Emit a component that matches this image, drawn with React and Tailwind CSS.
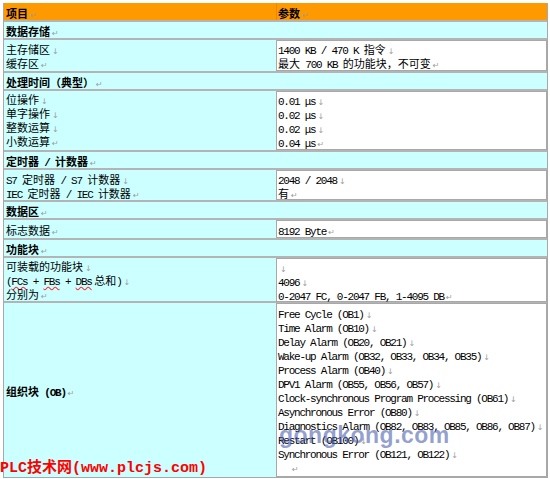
import React from "react";

const MONO = "font-['Liberation_Mono',monospace] text-[11px] tracking-[-1.25px]";
const CJK = "font-['Noto_Sans_CJK_SC',sans-serif] text-[11px]";

// split a string into ascii / cjk runs so each gets its own font
function Mixed({ text }) {
  const parts = text.match(/[\x00-\x7Fμ]+|[^\x00-\x7Fμ]+/g) || [];
  return parts.map((p, i) =>
    /[\x00-\x7Fμ]/.test(p[0]) ? (
      <span key={i} className={MONO}>{p}</span>
    ) : (
      <span key={i} className={CJK}>{p}</span>
    )
  );
}

function Mark({ m }) {
  if (!m) return null;
  return (
    <span className="ml-[2px] font-['DejaVu_Sans',sans-serif] text-[8px] font-normal text-[#9c9c9c]">
      {m === "p" ? "↵" : "↓"}
    </span>
  );
}

function Line({ t, m = "br", className = "" }) {
  return (
    <div className={`h-[14px] whitespace-nowrap leading-[14px] text-black ${className}`}>
      <Mixed text={t} />
      <Mark m={m} />
    </div>
  );
}

function Section({ title }) {
  return (
    <div className="flex h-[18px] items-center border-t-2 border-[#b4b4b4] bg-[#ccffff] px-[2px] font-bold">
      <Line t={title} m="p" />
    </div>
  );
}

function Row({ h, left, right, center = false }) {
  return (
    <div className={`grid grid-cols-[272px_1fr] border-t-2 border-[#b4b4b4] bg-[#ccffff] ${h}`}>
      <div className={`flex flex-col px-[2px] ${center ? "justify-center" : "justify-start"}`}>
        {left}
      </div>
      <div className="flex flex-col border border-[#a8a8a8] bg-white px-px">{right}</div>
    </div>
  );
}

export default function App() {
  return (
    <div className="relative h-[479px] w-[550px] overflow-hidden bg-white">
      <div className="ml-[3px] mt-[3px] w-[545px] border-x border-b border-[#a8a8a8]">
        {/* header */}
        <div className="grid h-[17px] grid-cols-[272px_1fr] bg-[#ff9900] font-bold">
          <div className="flex items-center px-[2px]">
            <Line t="项目" m="p" />
          </div>
          <div className="flex items-center border-l border-[#e08a10] px-px">
            <Line t="参数" m="p" />
          </div>
        </div>

        <Section title="数据存储" />
        <Row
          h="h-[33px]"
          left={
            <div className="pt-px">
              <Line t="主存储区" />
              <Line t="缓存区" m="p" />
            </div>
          }
          right={
            <div className="pt-0">
              <Line t="1400 KB / 470 K 指令" />
              <Line t="最大 700 KB 的功能块，不可变" m="p" />
            </div>
          }
        />

        <Section title="处理时间（典型）" />
        <Row
          h="h-[61px]"
          left={
            <>
              <Line t="位操作" />
              <Line t="单字操作" />
              <Line t="整数运算" />
              <Line t="小数运算" m="p" />
            </>
          }
          right={
            <>
              <Line t="0.01 μs" />
              <Line t="0.02 μs" />
              <Line t="0.02 μs" />
              <Line t="0.04 μs" m="p" />
            </>
          }
        />

        <Section title="定时器 / 计数器" />
        <Row
          h="h-[32px]"
          left={
            <div className="pt-px">
              <Line t="S7 定时器 / S7 计数器" className="h-[13px] leading-[13px]" />
              <Line t="IEC 定时器 / IEC 计数器" m="p" className="h-[13px] leading-[13px]" />
            </div>
          }
          right={
            <>
              <Line t="2048 / 2048" className="h-[13px] leading-[13px]" />
              <Line t="有" m="p" className="h-[13px] leading-[13px]" />
            </>
          }
        />

        <Section title="数据区" />
        <Row
          h="h-[20px]"
          left={
            <div className="pt-[2px]">
              <Line t="标志数据" m="p" />
            </div>
          }
          right={
            <div className="pt-px">
              <Line t="8192 Byte" m="p" />
            </div>
          }
        />

        <Section title="功能块" />
        <Row
          h="h-[45px]"
          left={
            <>
              <Line t="可装载的功能块" />
              <div className="h-[14px] whitespace-nowrap leading-[14px]">
                <span className={MONO}>(</span>
                <span className={`${MONO} underline decoration-red-500 decoration-wavy`}>FCs</span>
                <span className={MONO}> + </span>
                <span className={`${MONO} underline decoration-red-500 decoration-wavy`}>FBs</span>
                <span className={MONO}> + </span>
                <span className={`${MONO} underline decoration-red-500 decoration-wavy`}>DBs</span>
                <span className={CJK}> 总和</span>
                <span className={MONO}>)</span>
                <Mark m="br" />
              </div>
              <Line t="分别为" m="p" />
            </>
          }
          right={
            <>
              <Line t="" />
              <Line t="4096" />
              <Line t="0-2047 FC, 0-2047 FB, 1-4095 DB" m="p" />
            </>
          }
        />

        <Row
          h="h-[176px]"
          center
          left={
            <div className="font-bold">
              <Line t="组织块 (OB)" m="p" />
            </div>
          }
          right={
            <div className="pt-px">
              <Line t="Free Cycle (OB1)" />
              <Line t="Time Alarm (OB10)" />
              <Line t="Delay Alarm (OB20, OB21)" />
              <Line t="Wake-up Alarm (OB32, OB33, OB34, OB35)" />
              <Line t="Process Alarm (OB40)" />
              <Line t="DPV1 Alarm (OB55, OB56, OB57)" />
              <Line t="Clock-synchronous Program Processing (OB61)" />
              <Line t="Asynchronous Error (OB80)" />
              <Line t="Diagnostics Alarm (OB82, OB83, OB85, OB86, OB87)" />
              <Line t="Restart (OB100)" />
              <Line t="Synchronous Error (OB121, OB122)" />
              <Line t="" m="p" className="pl-[12px]" />
            </div>
          }
        />
      </div>

      {/* watermarks */}
      <div className="absolute left-[279px] top-[418px] font-['Liberation_Sans',sans-serif] text-[23px] font-bold tracking-[0.5px] text-[#4a5fb0]/60">
        gongkong.com
      </div>
      <div className="absolute left-0 top-[459px] whitespace-nowrap font-['Liberation_Mono','Noto_Sans_CJK_SC',monospace] text-[15px] font-bold leading-[20px] text-[#ff0000]">
        PLC技术网(www.plcjs.com)
      </div>
    </div>
  );
}
